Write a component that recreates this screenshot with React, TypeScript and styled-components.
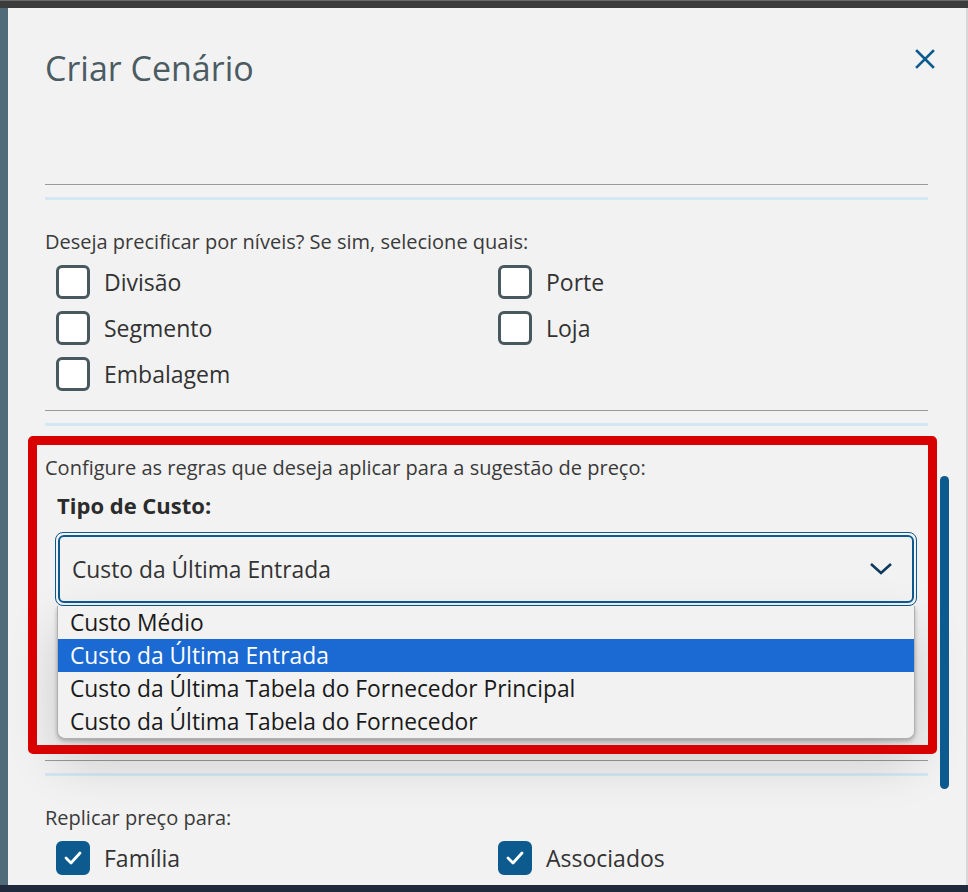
import styled, { createGlobalStyle } from "styled-components";

const GlobalStyle = createGlobalStyle`
  html, body {
    margin: 0;
    padding: 0;
    background: #4f6a78;
  }
  * {
    box-sizing: border-box;
  }
`;

const levelOptions = [
  { label: "Divisão", checked: false },
  { label: "Porte", checked: false },
  { label: "Segmento", checked: false },
  { label: "Loja", checked: false },
  { label: "Embalagem", checked: false },
];

const replicateOptions = [
  { label: "Família", checked: true },
  { label: "Associados", checked: true },
];

const costOptions = [
  "Custo Médio",
  "Custo da Última Entrada",
  "Custo da Última Tabela do Fornecedor Principal",
  "Custo da Última Tabela do Fornecedor",
];

const selectedCost = "Custo da Última Entrada";

export default function App() {
  return (
    <>
      <GlobalStyle />
      <Screen>
        <TopBar />
        <Middle>
          <SideStrip />
          <Modal>
            <Header>
              <Title>Criar Cenário</Title>
              <CloseButton aria-label="Fechar">
                <svg width="20" height="20" viewBox="0 0 20 20">
                  <path
                    d="M2 2 L18 18 M18 2 L2 18"
                    stroke="#0c5a8e"
                    strokeWidth="2.6"
                    strokeLinecap="square"
                  />
                </svg>
              </CloseButton>
            </Header>

            <Divider />

            <Section>
              <Question>Deseja precificar por níveis? Se sim, selecione quais:</Question>
              <CheckGrid>
                {levelOptions.map((opt) => (
                  <CheckItem key={opt.label} label={opt.label} checked={opt.checked} />
                ))}
              </CheckGrid>
            </Section>

            <Divider $top={19} />

            <Highlight>
              <Question>
                Configure as regras que deseja aplicar para a sugestão de preço:
              </Question>
              <FieldLabel>Tipo de Custo:</FieldLabel>
              <SelectBox>
                <SelectInner>
                  <span>{selectedCost}</span>
                  <svg width="24" height="14" viewBox="0 0 24 14">
                    <path
                      d="M2 2 L12 11 L22 2"
                      fill="none"
                      stroke="#0d3a5c"
                      strokeWidth="2.6"
                    />
                  </svg>
                </SelectInner>
              </SelectBox>
              <OptionList>
                {costOptions.map((opt) => (
                  <OptionRow key={opt} $selected={opt === selectedCost}>
                    {opt}
                  </OptionRow>
                ))}
              </OptionList>
            </Highlight>

            <Divider $top={6} />

            <Section $top={31}>
              <Question>Replicar preço para:</Question>
              <CheckGrid>
                {replicateOptions.map((opt) => (
                  <CheckItem key={opt.label} label={opt.label} checked={opt.checked} />
                ))}
              </CheckGrid>
            </Section>

            <ScrollThumb />
          </Modal>
          <RightEdge />
        </Middle>
        <BottomBar />
      </Screen>
    </>
  );
}

function CheckItem({ label, checked }: { label: string; checked: boolean }) {
  return (
    <CheckRow>
      <Box $checked={checked}>
        {checked && (
          <svg width="18" height="14" viewBox="0 0 18 14">
            <path
              d="M2 7 L7 12 L16 2"
              fill="none"
              stroke="#ffffff"
              strokeWidth="2.8"
              strokeLinecap="round"
              strokeLinejoin="round"
            />
          </svg>
        )}
      </Box>
      <CheckLabel>{label}</CheckLabel>
    </CheckRow>
  );
}

const Screen = styled.div`
  width: 968px;
  height: 892px;
  display: flex;
  flex-direction: column;
  overflow: hidden;
  font-family: "Open Sans", "Noto Sans", sans-serif;
  color: #333333;
`;

const TopBar = styled.div`
  height: 8px;
  flex-shrink: 0;
  background: #3c3c3c;
  border-top: 1px solid #6a6a6a;
`;

const BottomBar = styled.div`
  height: 7px;
  flex-shrink: 0;
  background: #1f2a3c;
`;

const Middle = styled.div`
  flex: 1;
  display: flex;
  min-height: 0;
`;

const SideStrip = styled.div`
  width: 8px;
  flex-shrink: 0;
  background: #4f6a78;
`;

const RightEdge = styled.div`
  width: 2px;
  flex-shrink: 0;
  background: #d8d8d8;
`;

const Modal = styled.div`
  position: relative;
  flex: 1;
  background: #f2f2f2;
  padding: 0 38px 0 37px;
  overflow: hidden;
`;

const Header = styled.div`
  display: flex;
  justify-content: space-between;
  align-items: flex-start;
  height: 176px;
  padding-top: 39px;
`;

const Title = styled.h1`
  margin: 0;
  font-size: 34px;
  font-weight: 400;
  color: #4b5b62;
  line-height: 42px;
`;

const CloseButton = styled.button`
  border: none;
  background: none;
  padding: 0;
  margin: 2px -7px 0 0;
  width: 20px;
  height: 20px;
  cursor: pointer;
`;

const Divider = styled.div<{ $top?: number }>`
  margin-top: ${({ $top }) => $top ?? 0}px;
  height: 16px;
  border-top: 1px solid #9a9a9a;
  border-bottom: 3px solid #d2e9f3;
`;

const Section = styled.div<{ $top?: number }>`
  padding-top: ${({ $top }) => $top ?? 31}px;
`;

const Question = styled.p`
  margin: 0;
  font-size: 20px;
  line-height: 22px;
  color: #3a3a3a;
  white-space: nowrap;
`;

const CheckGrid = styled.div`
  display: grid;
  grid-template-columns: 442px 1fr;
  row-gap: 12px;
  padding: 12px 0 0 11px;
`;

const CheckRow = styled.label`
  display: flex;
  align-items: center;
  gap: 14px;
  height: 34px;
`;

const Box = styled.span<{ $checked: boolean }>`
  width: 34px;
  height: 34px;
  flex-shrink: 0;
  border-radius: 6px;
  display: flex;
  align-items: center;
  justify-content: center;
  background: ${({ $checked }) => ($checked ? "#0c5a8e" : "#ffffff")};
  border: 3px solid ${({ $checked }) => ($checked ? "#0c5a8e" : "#48585f")};
`;

const CheckLabel = styled.span`
  font-size: 23px;
  line-height: 30px;
  color: #333333;
`;

const Highlight = styled.div`
  position: relative;
  margin: 10px 0 0 0;
  padding: 21px 0 15px 0;

  &::after {
    content: "";
    position: absolute;
    top: 0;
    bottom: 0;
    left: -17px;
    right: -9px;
    border: 9px solid #d90000;
    border-radius: 5px;
    pointer-events: none;
  }
`;

const FieldLabel = styled.div`
  margin: 14px 0 0 12px;
  font-size: 22px;
  font-weight: 700;
  color: #2b2b2b;
  line-height: 24px;
`;

const SelectBox = styled.div`
  margin: 15px 11px 0 10px;
  padding: 2px;
  border: 1px solid #0c5a8e;
  border-radius: 8px;
  height: 74px;
`;

const SelectInner = styled.div`
  height: 100%;
  display: flex;
  align-items: center;
  justify-content: space-between;
  padding: 0 19px 0 12px;
  border: 2px solid #0c5a8e;
  border-radius: 6px;
  background: #f2f2f2;
  font-size: 22.8px;
  color: #333333;
`;

const OptionList = styled.div`
  margin: 0 13px 0 12px;
  background: #f2f2f2;
  border: 1px solid #b0b0b0;
  border-top: none;
  border-radius: 0 0 8px 8px;
  overflow: hidden;
  box-shadow: 0 22px 50px rgba(0, 0, 0, 0.17), 0 2px 4px rgba(0, 0, 0, 0.25);
`;

const OptionRow = styled.div<{ $selected: boolean }>`
  height: 33px;
  line-height: 33px;
  padding-left: 12px;
  font-size: 22.8px;
  background: ${({ $selected }) => ($selected ? "#1b69d3" : "transparent")};
  color: ${({ $selected }) => ($selected ? "#ffffff" : "#1a1a1a")};
`;

const ScrollThumb = styled.div`
  position: absolute;
  top: 468px;
  left: 932px;
  width: 9px;
  height: 313px;
  border-radius: 5px;
  background: #0c5a8e;
`;
